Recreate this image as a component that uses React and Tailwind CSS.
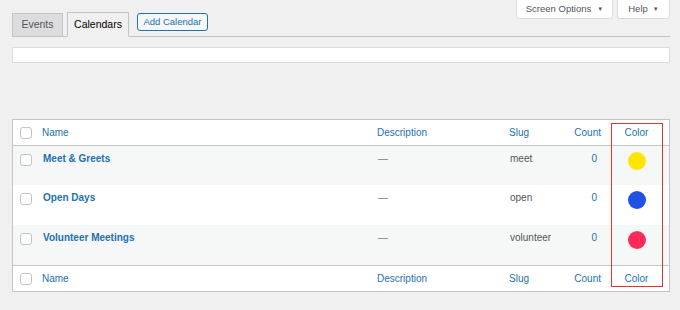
import React from 'react';

const rows = [
  { name: 'Meet & Greets', slug: 'meet', color: 'bg-[#ffe500]', bg: 'bg-[#f6f7f7]', h: 'h-[39px]' },
  { name: 'Open Days', slug: 'open', color: 'bg-[#2150e6]', bg: 'bg-white', h: 'h-[40px]' },
  { name: 'Volunteer Meetings', slug: 'volunteer', color: 'bg-[#ff2a5a]', bg: 'bg-[#f6f7f7]', h: 'h-[40px]' },
];

const cols = 'grid grid-cols-[29px_335px_132px_62px_30px_1fr]';

const Check = () => (
  <span className="block w-[12px] h-[12px] rounded-[3px] border border-[#c3c4c7] bg-white"></span>
);

const HeadRow = ({ className }) => (
  <div className={`${cols} h-[26px] items-center text-[10px] text-[#2271b1] ${className}`}>
    <div className="pl-[7px]"><Check /></div>
    <div>Name</div>
    <div>Description</div>
    <div>Slug</div>
    <div className="text-right">Count</div>
    <div className="text-center pl-[3px]">Color</div>
  </div>
);

const App = () => {
  return (
    <div className="relative w-[680px] h-[310px] bg-[#f0f0f1] overflow-hidden font-['Liberation_Sans',Arial,sans-serif]">
      {/* screen meta links */}
      <div className="absolute top-0 right-[10px] flex gap-[4px]">
        <div className="w-[97px] h-[19px] bg-white border border-t-0 border-[#dcdcde] rounded-b-[3px] flex items-center justify-center gap-[6px] text-[9.5px] text-[#50575e]">
          Screen Options <span className="text-[6px]">▼</span>
        </div>
        <div className="w-[53px] h-[19px] bg-white border border-t-0 border-[#dcdcde] rounded-b-[3px] flex items-center justify-center gap-[5px] text-[9.5px] text-[#50575e]">
          Help <span className="text-[6px]">▼</span>
        </div>
      </div>

      <div className="pl-[12px] pr-[10px] pt-[12px]">
        <div className="flex items-end border-b border-[#c3c4c7] h-[25px]">
          <div className="w-[51px] h-[24px] -mb-px flex items-center justify-center bg-[#dcdcde] border border-[#c3c4c7] text-[10.5px] font-medium text-[#50575e]">
            Events
          </div>
          <div className="ml-[4px] w-[62px] h-[25px] -mb-px flex items-center justify-center bg-[#f0f0f1] border border-[#c3c4c7] border-b-[#f0f0f1] text-[10.5px] font-medium text-black">
            Calendars
          </div>
          <div className="ml-[8px] mb-[5px] w-[71px] h-[18px] flex items-center justify-center bg-[#f6f7f7] border border-[#2271b1] rounded-[3px] text-[9.5px] font-medium text-[#2271b1]">
            Add Calendar
          </div>
        </div>

        <div className="mt-[10px] h-[16px] bg-white border border-[#dcdcde]"></div>

        <div className="relative mt-[56px] bg-white border border-[#c3c4c7]">
          <HeadRow className="border-b border-[#c3c4c7]" />
          {rows.map((r) => (
            <div key={r.slug} className={`${cols} ${r.h} ${r.bg} items-start text-[10px]`}>
              <div className="pl-[7px] pt-[8px]"><Check /></div>
              <div className="pt-[5px] pl-px font-bold text-[#2271b1]">{r.name}</div>
              <div className="pt-[5px] pl-px text-[#787c82]">—</div>
              <div className="pt-[5px] pl-px text-[#50575e]">{r.slug}</div>
              <div className="pt-[5px] pr-[4px] text-right text-[#2271b1]">0</div>
              <div className="pt-[6px] flex justify-center pl-[3px]">
                <span className={`block w-[18px] h-[18px] rounded-full ${r.color}`}></span>
              </div>
            </div>
          ))}
          <HeadRow className="border-t border-[#c3c4c7]" />

          <div className="absolute left-[598px] top-[3px] w-[52px] h-[164px] border-[1.5px] border-[#e8352b]"></div>
        </div>
      </div>
    </div>
  );
};

export default App;
